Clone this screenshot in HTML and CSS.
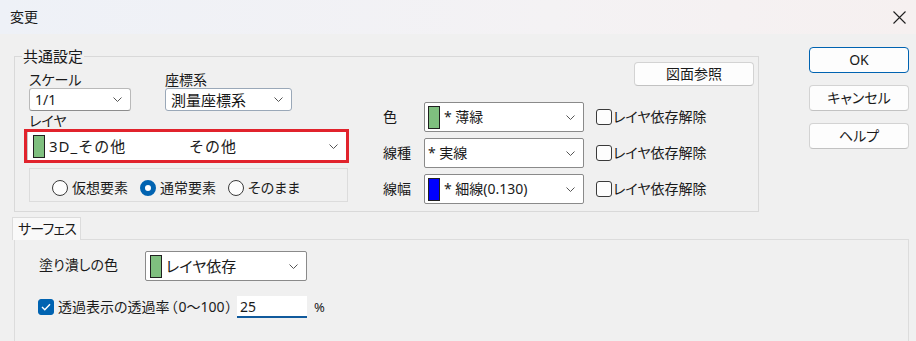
FILE: index.html
```html
<!DOCTYPE html>
<html lang="ja">
<head>
    <meta charset="UTF-8">
    <title>変更</title>
    <link rel="stylesheet" href="styles.css">
</head>
<body>
    <div class="titlebar">
        <span class="title">変更</span>
        <svg class="close" width="13" height="13" viewBox="0 0 13 13">
            <path d="M0.5 0.5 L12.5 12.5 M12.5 0.5 L0.5 12.5" stroke="#1f1f1f" stroke-width="1.1" fill="none"/>
        </svg>
    </div>

    <div class="client">
        <div class="top">
            <fieldset class="group">
                <legend>共通設定</legend>
                <div class="left">
                    <div class="pair">
                        <div class="field scale">
                            <div class="lbl">スケール</div>
                            <div class="combo">
                                <span class="val">1/1</span>
                                <svg class="chev" width="9" height="5" viewBox="0 0 9 5"><path d="M0.5 0.5 L4.5 4.5 L8.5 0.5" stroke="#555" fill="none"/></svg>
                            </div>
                        </div>
                        <div class="field coord">
                            <div class="lbl">座標系</div>
                            <div class="combo">
                                <span class="val">測量座標系</span>
                                <svg class="chev" width="9" height="5" viewBox="0 0 9 5"><path d="M0.5 0.5 L4.5 4.5 L8.5 0.5" stroke="#555" fill="none"/></svg>
                            </div>
                        </div>
                    </div>
                    <div class="lbl layer-lbl">レイヤ</div>
                    <div class="highlight">
                        <div class="combo layer">
                            <span class="swatch green"></span>
                            <span class="layer-name">3D_その他</span>
                            <span class="layer-name">その他</span>
                            <svg class="chev" width="9" height="5" viewBox="0 0 9 5"><path d="M0.5 0.5 L4.5 4.5 L8.5 0.5" stroke="#555" fill="none"/></svg>
                        </div>
                    </div>
                    <div class="radios">
                        <label class="radio"><span class="dot"></span>仮想要素</label>
                        <label class="radio"><span class="dot on"></span>通常要素</label>
                        <label class="radio"><span class="dot"></span>そのまま</label>
                    </div>
                </div>

                <div class="right">
                    <div class="ref-row">
                        <button class="btn ref">図面参照</button>
                    </div>
                    <div class="prop-row">
                        <span class="prop-lbl">色</span>
                        <div class="combo prop">
                            <span class="swatch green"></span>
                            <span class="val">* 薄緑</span>
                            <svg class="chev" width="9" height="5" viewBox="0 0 9 5"><path d="M0.5 0.5 L4.5 4.5 L8.5 0.5" stroke="#555" fill="none"/></svg>
                        </div>
                        <label class="check"><span class="box"></span>レイヤ依存解除</label>
                    </div>
                    <div class="prop-row">
                        <span class="prop-lbl">線種</span>
                        <div class="combo prop">
                            <span class="val">* 実線</span>
                            <svg class="chev" width="9" height="5" viewBox="0 0 9 5"><path d="M0.5 0.5 L4.5 4.5 L8.5 0.5" stroke="#555" fill="none"/></svg>
                        </div>
                        <label class="check"><span class="box"></span>レイヤ依存解除</label>
                    </div>
                    <div class="prop-row">
                        <span class="prop-lbl">線幅</span>
                        <div class="combo prop">
                            <span class="swatch blue"></span>
                            <span class="val">* 細線(0.130)</span>
                            <svg class="chev" width="9" height="5" viewBox="0 0 9 5"><path d="M0.5 0.5 L4.5 4.5 L8.5 0.5" stroke="#555" fill="none"/></svg>
                        </div>
                        <label class="check"><span class="box"></span>レイヤ依存解除</label>
                    </div>
                </div>
            </fieldset>

            <div class="actions">
                <button class="btn default">OK</button>
                <button class="btn">キャンセル</button>
                <button class="btn">ヘルプ</button>
            </div>
        </div>

        <div class="tabs">
            <div class="tab-strip">
                <div class="tab active">サーフェス</div>
            </div>
            <div class="tab-panel">
                <div class="fill-row">
                    <span class="fill-lbl">塗り潰しの色</span>
                    <div class="combo fill">
                        <span class="swatch green"></span>
                        <span class="val">レイヤ依存</span>
                        <svg class="chev" width="9" height="5" viewBox="0 0 9 5"><path d="M0.5 0.5 L4.5 4.5 L8.5 0.5" stroke="#555" fill="none"/></svg>
                    </div>
                </div>
                <div class="alpha-row">
                    <label class="check">
                        <span class="box on">
                            <svg width="10" height="8" viewBox="0 0 10 8"><path d="M1 4 L3.8 6.8 L9 1.2" stroke="#fff" stroke-width="1.4" fill="none"/></svg>
                        </span>
                        <span class="alpha-text">透過表示の透過率<span class="paren">（</span>0～100<span class="paren">）</span></span>
                    </label>
                    <input class="num" type="text" value="25">
                    <span class="pct">%</span>
                </div>
            </div>
        </div>
    </div>
</body>
</html>
```

FILE: styles.css
```css
* {
    margin: 0;
    padding: 0;
    box-sizing: border-box;
}

body {
    width: 916px;
    height: 341px;
    overflow: hidden;
    background-color: #f0f0f0;
    color: #1a1a1a;
    font-family: "Noto Sans", "Noto Sans CJK JP", sans-serif;
    font-size: 14px;
    line-height: 16px;
    font-feature-settings: "palt";
}

/* title bar */
.titlebar {
    height: 34px;
    display: flex;
    align-items: center;
    justify-content: space-between;
    padding: 0 10px;
    background: linear-gradient(90deg, #eef1f7, #f4f2f4 60%, #f6f0f0);
}

.title {
    font-size: 14px;
    line-height: 18px;
}

.close {
    display: block;
}

.client {
    padding: 0 7px 0 14px;
}

.top {
    display: flex;
    align-items: flex-start;
}

/* group box */
.group {
    width: 745px;
    margin-top: 13px;
    border: 1px solid #d9d9d9;
    padding: 7px 9px 7px 9px;
    display: flex;
}

.group legend {
    font-size: 15px;
    line-height: 18px;
    padding: 0 1px;
    margin-left: -2px;
}

.left {
    width: 325px;
}

.pair {
    display: flex;
    padding-left: 5px;
}

.field.scale {
    width: 136px;
}

.lbl {
    line-height: 16px;
}

.layer-lbl {
    margin-top: 2px;
    padding-left: 5px;
}

/* combo boxes */
.combo {
    display: flex;
    align-items: center;
    background-color: #fff;
    border: 1px solid #b9b9b9;
    border-bottom-color: #8d8d8d;
    border-radius: 3px;
    padding: 0 8px 0 5px;
    white-space: nowrap;
}

.combo .chev {
    margin-left: auto;
    flex-shrink: 0;
}

.field.scale .combo {
    width: 102px;
    height: 23px;
}

.field.coord .combo {
    width: 127px;
    height: 23px;
    border-color: #9aa8b8;
    font-size: 15px;
}

.swatch {
    width: 12px;
    height: 23px;
    border: 1px solid #202020;
    flex-shrink: 0;
    margin-right: 4px;
}

.swatch.green {
    background-color: #7fbf7f;
}

.swatch.blue {
    background-color: #0000ff;
}

.highlight {
    border: 3px solid #e1232c;
    height: 34px;
}

.combo.layer {
    height: 28px;
    border: none;
    border-radius: 0;
    border-left: 1px solid #c8c8c8;
    padding-left: 5px;
}

.layer-name {
    font-size: 15px;
    letter-spacing: 1px;
    font-feature-settings: normal;
    width: 147px;
}

.radios {
    margin: 5px 1px 0 5px;
    height: 34px;
    border: 1px solid #dcdcdc;
    display: flex;
    align-items: center;
    padding: 6px 0 0 22px;
}

.radio {
    display: flex;
    align-items: center;
    gap: 4px;
    margin-right: 12px;
    font-size: 14px;
}

.dot {
    width: 16px;
    height: 16px;
    border: 1px solid #3a3a3a;
    border-radius: 50%;
    background-color: #fdfdfd;
}

.dot.on {
    border: 5px solid #0063b1;
    background-color: #fff;
}

/* right side of group */
.right {
    flex: 1;
    margin-left: 34px;
}

.ref-row {
    display: flex;
    justify-content: flex-end;
    margin: -10px -5px 0 0;
}

.btn {
    font-family: inherit;
    font-size: 14px;
    line-height: 16px;
    color: #1a1a1a;
    background-color: #fdfdfd;
    border: 1px solid #d3d3d3;
    border-bottom-color: #c2c2c2;
    border-radius: 4px;
    font-feature-settings: "palt";
}

.btn.ref {
    width: 120px;
    height: 24px;
}

.prop-row {
    display: flex;
    align-items: center;
    height: 30px;
    margin-top: 6px;
}

.ref-row + .prop-row {
    margin-top: 16px;
}

.prop-lbl {
    width: 41px;
}

.combo.prop {
    width: 160px;
    height: 30px;
    border-radius: 2px;
    border-color: #8a8a8a;
    padding-left: 3px;
}

.check {
    display: flex;
    align-items: center;
    margin-left: 12px;
    gap: 1px;
}

.box {
    width: 16px;
    height: 16px;
    border: 1px solid #3a3a3a;
    border-radius: 3px;
    background-color: #fdfdfd;
    display: flex;
    align-items: center;
    justify-content: center;
}

.box.on {
    background-color: #0063b1;
    border-color: #0063b1;
}

/* dialog buttons */
.actions {
    margin: 13px 0 0 auto;
    width: 100px;
    display: flex;
    flex-direction: column;
    gap: 12px;
}

.actions .btn {
    height: 26px;
}

.actions .btn.default {
    border: 1px solid #0063b1;
    font-family: "Noto Sans", sans-serif;
}

/* tab control */
.tabs {
    margin-top: 5px;
}

.tab-strip {
    display: flex;
    margin-left: -2px;
}

.tab {
    height: 23px;
    width: 69px;
    line-height: 21px;
    padding-left: 5px;
    white-space: nowrap;
    letter-spacing: -0.8px;
    background-color: #f9f9f9;
    border: 1px solid #dcdcdc;
    border-bottom: none;
    font-size: 14px;
    position: relative;
    z-index: 1;
}

.tab-panel {
    margin-top: -1px;
    width: 895px;
    height: 110px;
    border: 1px solid #dcdcdc;
    padding: 11px 0 0 23px;
}

.fill-row {
    display: flex;
    align-items: center;
}

.fill-lbl {
    width: 107px;
    padding-left: 1px;
    margin-top: -3px;
}

.combo.fill {
    width: 162px;
    height: 30px;
    border-radius: 2px;
    border-color: #8a8a8a;
    padding-left: 4px;
    font-size: 15px;
}

.alpha-row {
    display: flex;
    align-items: center;
    margin-top: 15px;
}

.alpha-row .check {
    margin-left: 0;
    gap: 4px;
}

.alpha-text {
    width: 179px;
    font-size: 14px;
    white-space: nowrap;
}

.paren {
    display: inline-block;
    width: 9px;
    text-align: center;
}

.num {
    width: 70px;
    height: 22px;
    border: none;
    border-bottom: 2px solid #105a9c;
    background-color: #fff;
    outline: none;
    font-family: "Noto Sans", sans-serif;
    font-size: 14px;
    padding-left: 3px;
    color: #1a1a1a;
}

.pct {
    margin-left: 7px;
    font-size: 13px;
}
```
